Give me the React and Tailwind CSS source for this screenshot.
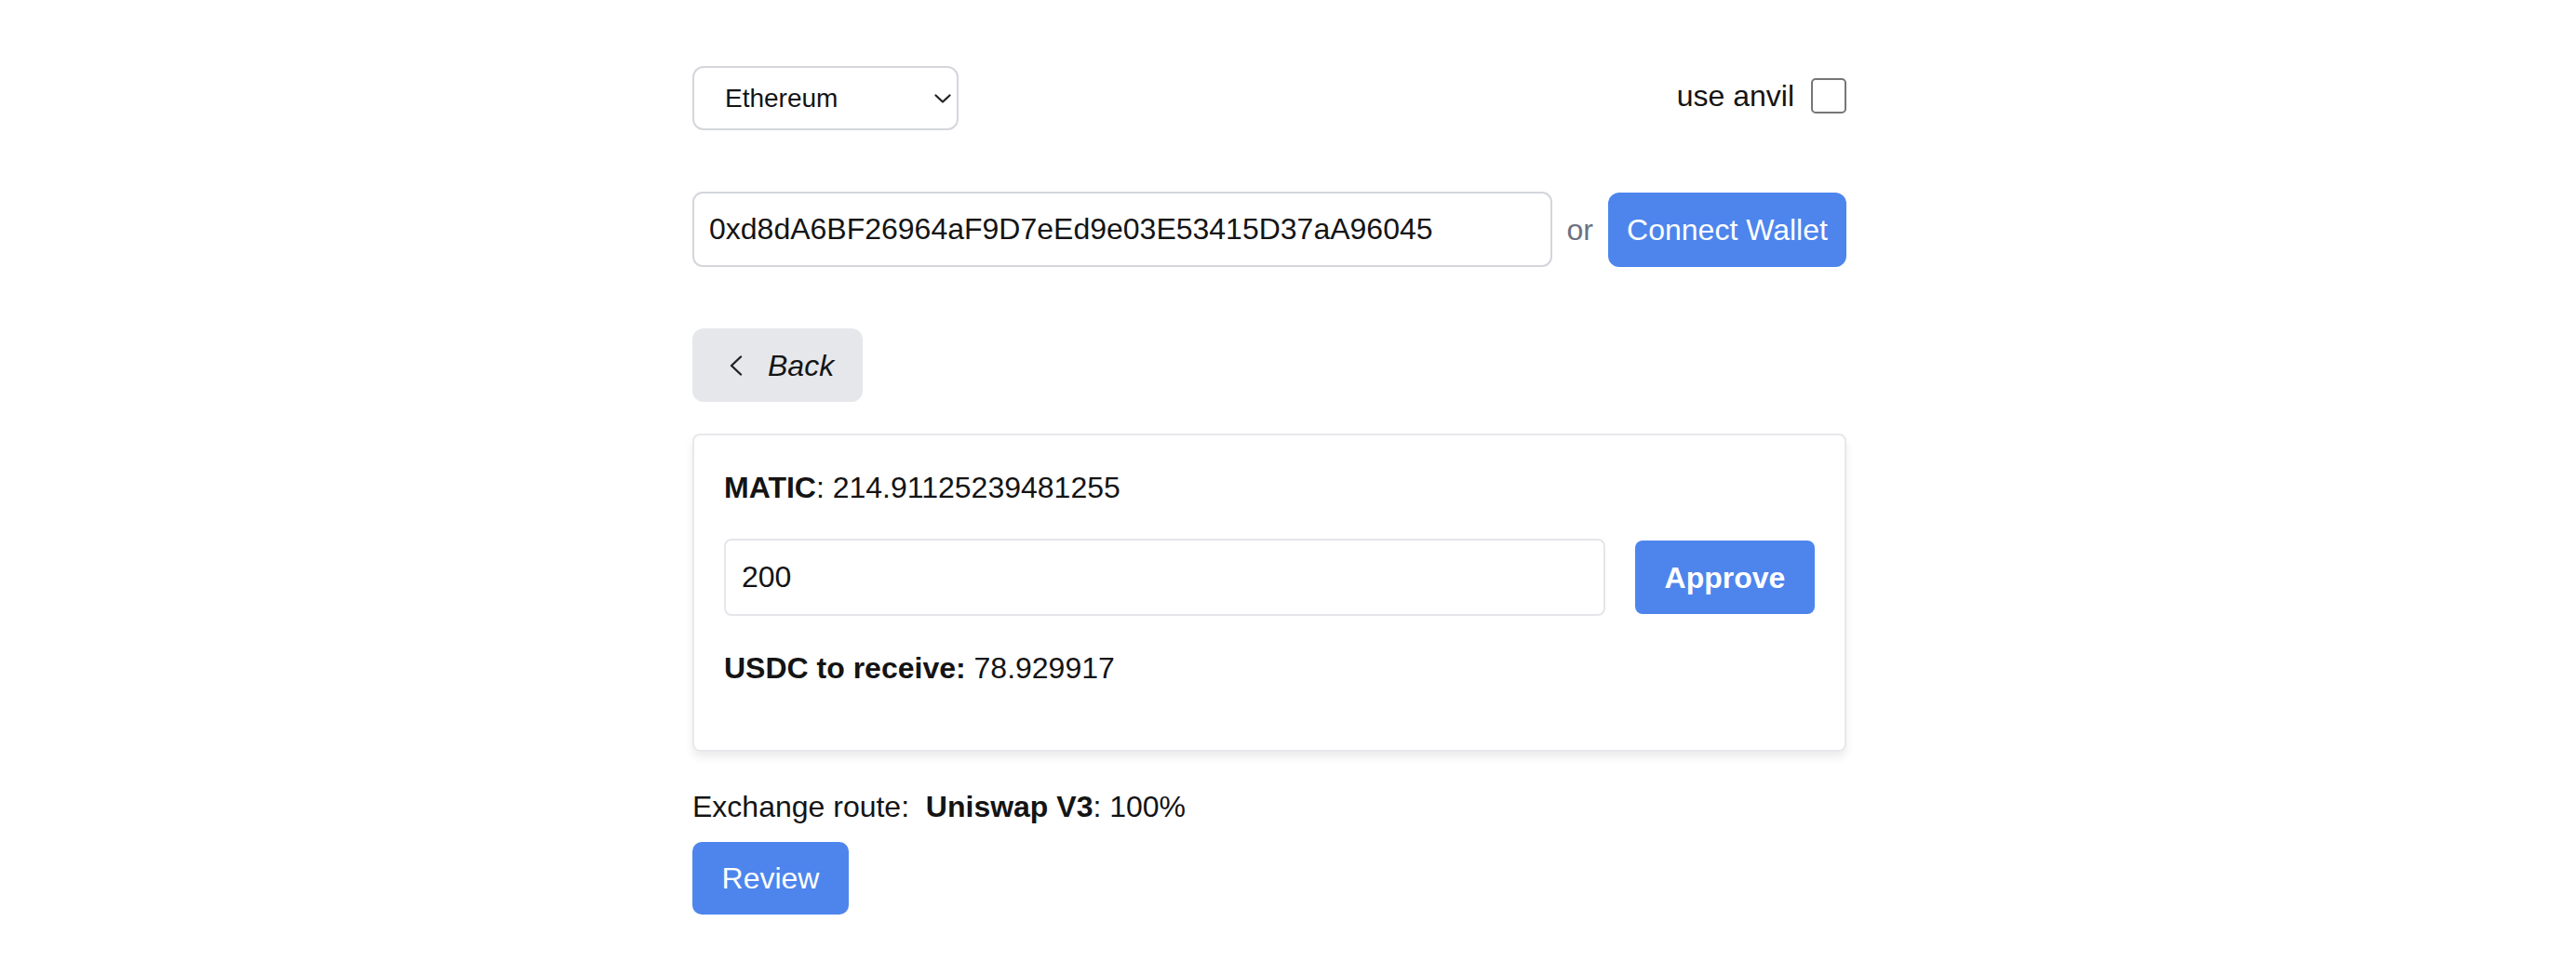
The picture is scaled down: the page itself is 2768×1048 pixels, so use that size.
import { useState } from 'react';

function Chevron({ className }) {
  return (
    <svg viewBox="0 0 18 10" className={className} fill="none" stroke="currentColor" strokeWidth="2.2" strokeLinecap="round" strokeLinejoin="round">
      <polyline points="1.5,1.5 9,8.5 16.5,1.5" />
    </svg>
  );
}

export default function App() {
  const [chain, setChain] = useState('Ethereum');
  const [address, setAddress] = useState('0xd8dA6BF26964aF9D7eEd9e03E53415D37aA96045');
  const [amount, setAmount] = useState('200');
  const [anvil, setAnvil] = useState(false);

  return (
    <div className="min-h-screen bg-white font-['Liberation_Sans',Arial,sans-serif] text-[32px] leading-[48px] text-[#141414]">
      <div className="ml-[744px] w-[1240px] pt-[71px]">
        <div className="flex h-[69px] items-center justify-between">
          <div className="relative h-[69px] w-[286px]">
            <select
              value={chain}
              onChange={e => setChain(e.target.value)}
              className="h-full w-full appearance-none rounded-[12px] border-2 border-[#d4d6dc] bg-white pl-[33px] text-[28px] text-[#141414] outline-none"
            >
              <option>Ethereum</option>
              <option>Polygon</option>
              <option>Arbitrum</option>
            </select>
            <Chevron className="pointer-events-none absolute right-[8px] top-[30px] h-[10px] w-[18px] text-[#222]" />
          </div>
          <label className="mt-[-6px] flex items-center gap-[18px]">
            <span>use anvil</span>
            <button
              onClick={() => setAnvil(!anvil)}
              className="h-[38px] w-[38px] rounded-[5px] border-2 border-[#767676] bg-white"
            />
          </label>
        </div>

        <div className="mt-[66px] flex items-center gap-4">
          <input
            value={address}
            onChange={e => setAddress(e.target.value)}
            className="h-[81px] flex-1 rounded-[11px] border-2 border-[#d4d6dc] px-[16px] text-[32px] outline-none"
          />
          <span className="text-[#6b7280]">or</span>
          <button className="h-[80px] w-[256px] rounded-[12px] bg-[#4d85ed] text-white">Connect Wallet</button>
        </div>

        <button className="mt-[66px] flex h-[79px] w-[183px] items-center rounded-[12px] bg-[#e5e7eb] pl-[40px]">
          <svg viewBox="0 0 14 22" className="h-[22px] w-[14px]" fill="none" stroke="#222" strokeWidth="2.4" strokeLinecap="round" strokeLinejoin="round">
            <polyline points="12,1.5 2,11 12,20.5" />
          </svg>
          <span className="ml-[27px] italic">Back</span>
        </button>

        <div className="mt-[34px] rounded-[8px] border-2 border-[#e8e8ec] px-[32px] pb-[64px] pt-[32px] shadow-[0_6px_10px_rgba(0,0,0,0.08)]">
          <p><b>MATIC</b>: 214.91125239481255</p>
          <div className="mt-[31px] flex items-center gap-[32px]">
            <input
              value={amount}
              onChange={e => setAmount(e.target.value)}
              className="h-[83px] flex-1 rounded-[8px] border-2 border-[#e5e6ea] px-[17px] text-[32px] outline-none"
            />
            <button className="h-[79px] w-[193px] rounded-[8px] bg-[#4d85ed] font-bold text-white">Approve</button>
          </div>
          <p className="mt-[32px]"><b>USDC to receive:</b> 78.929917</p>
        </div>

        <p className="mt-[35px] whitespace-pre">Exchange route:  <b>Uniswap V3</b>: 100%</p>
        <button className="mt-[14px] h-[78px] w-[168px] rounded-[10px] bg-[#4d85ed] text-white">Review</button>
      </div>
    </div>
  );
}
